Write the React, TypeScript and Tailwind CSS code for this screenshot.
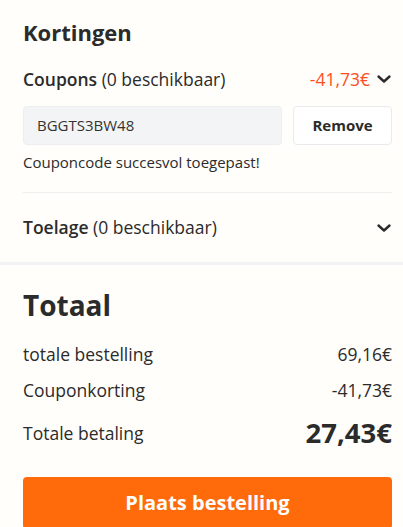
import React from 'react';

const Chevron = () => (
  <svg width="16" height="16" viewBox="0 0 16 16" fill="none" className="text-[#2b2b2b]">
    <path d="M2.5 5.5L8 10.5L13.5 5.5" stroke="currentColor" strokeWidth="2.4" strokeLinecap="round" strokeLinejoin="round" />
  </svg>
);

const App: React.FC = () => {
  return (
    <div className="w-[403px] h-[527px] overflow-hidden bg-[#fffefb] text-[#2b2b2b] font-['Open_Sans',sans-serif]">
      {/* Kortingen */}
      <div className="pl-[23px] pr-[11px]">
        <h2 className="pt-[18px] text-[22px] leading-[28px] font-bold">Kortingen</h2>

        <div className="mt-[18px] flex items-center justify-between h-[30px]">
          <div className="text-[17.5px]">
            <span className="font-semibold">Coupons</span> (0 beschikbaar)
          </div>
          <div className="flex items-center gap-[6px]">
            <span className="text-[17.5px] text-[#ff4d1f]">-41,73€</span>
            <Chevron />
          </div>
        </div>

        <div className="mt-[12px] flex gap-[11px]">
          <div className="flex-1 h-[39px] rounded-[4px] bg-[#f3f4f5] border border-[#eceef0] flex items-center px-[13px] text-[15px] text-[#333]">
            BGGTS3BW48
          </div>
          <button className="w-[99px] h-[39px] rounded-[4px] bg-white border border-[#e8eaec] text-[15px] font-bold">
            Remove
          </button>
        </div>

        <p className="mt-[7px] text-[15px] leading-[20px]">Couponcode succesvol toegepast!</p>

        <div className="mt-[20px] border-t border-[#efefef]" />

        <div className="flex items-center justify-between h-[69px]">
          <div className="text-[17.5px]">
            <span className="font-semibold">Toelage</span> (0 beschikbaar)
          </div>
          <Chevron />
        </div>
      </div>

      <div className="h-[3px] bg-[#f2f3f5]" />

      {/* Totaal */}
      <div className="pl-[23px] pr-[11px]">
        <h2 className="mt-[22px] text-[28px] leading-[36px] font-bold">Totaal</h2>

        <div className="mt-[18px] flex items-center justify-between h-[26px] text-[17.5px]">
          <span>totale bestelling</span>
          <span>69,16€</span>
        </div>
        <div className="mt-[10px] flex items-center justify-between h-[26px] text-[17.5px]">
          <span>Couponkorting</span>
          <span>-41,73€</span>
        </div>
        <div className="mt-[7px] flex items-center justify-between h-[46px]">
          <span className="text-[17.5px]">Totale betaling</span>
          <span className="text-[27.5px] font-bold">27,43€</span>
        </div>

        <button className="mt-[21px] w-full h-[52px] rounded-[4px] bg-[#ff6b0b] text-white text-[20px] font-bold">
          Plaats bestelling
        </button>
      </div>
    </div>
  );
};

export default App;
